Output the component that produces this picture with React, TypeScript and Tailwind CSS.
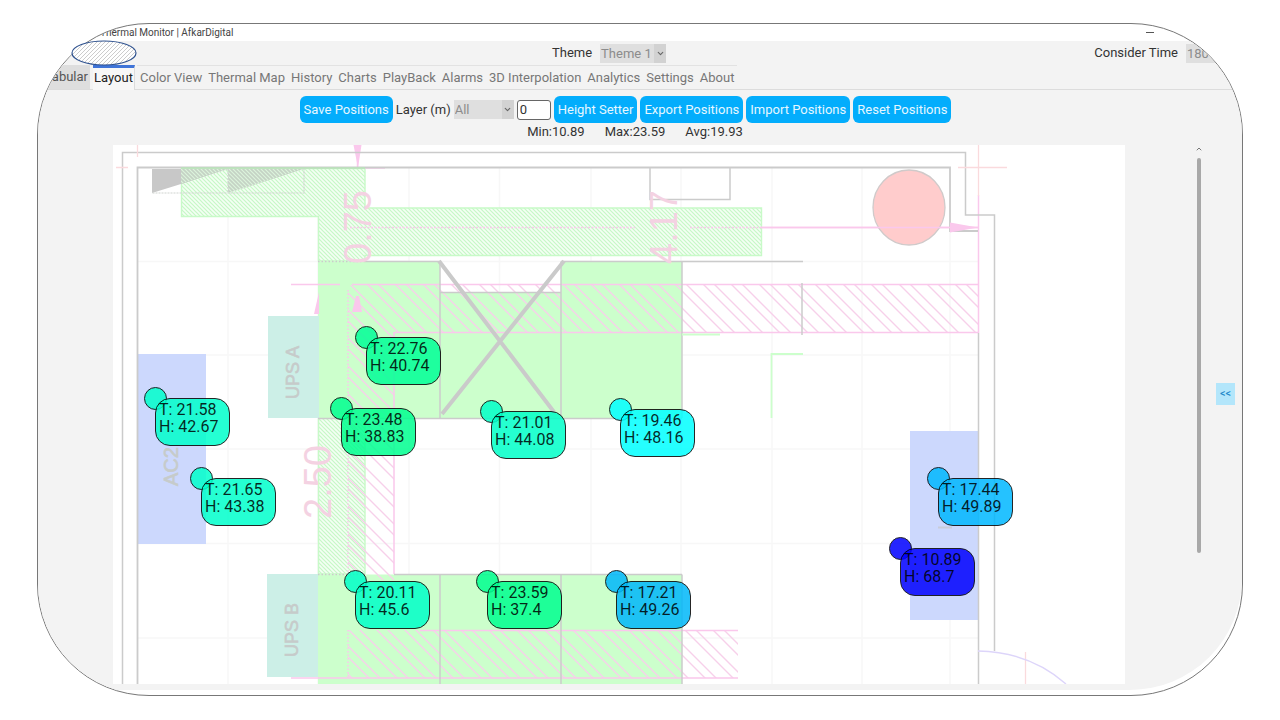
import { ChevronDown, ChevronUp } from "lucide-react";

const TABS = [
  "Tabular",
  "Layout",
  "Color View",
  "Thermal Map",
  "History",
  "Charts",
  "PlayBack",
  "Alarms",
  "3D Interpolation",
  "Analytics",
  "Settings",
  "About",
];

const STATS = [
  { label: "Min:", value: "10.89" },
  { label: "Max:", value: "23.59" },
  { label: "Avg:", value: "19.93" },
];

const PLAN = { x: 113, y: 145, width: 1012, height: 539 };

type Sensor = { x: number; y: number; t: string; h: string; color: string };

const SENSORS: Sensor[] = [
  { x: 366, y: 337, t: "22.76", h: "40.74", color: "bg-[#00ff96]" },
  { x: 341, y: 408, t: "23.48", h: "38.83", color: "bg-[#00ff90]" },
  { x: 155, y: 398, t: "21.58", h: "42.67", color: "bg-[#00ffcc]" },
  { x: 201, y: 478, t: "21.65", h: "43.38", color: "bg-[#00ffcc]" },
  { x: 491, y: 411, t: "21.01", h: "44.08", color: "bg-[#00ffc8]" },
  { x: 620, y: 409, t: "19.46", h: "48.16", color: "bg-[#00ffff]" },
  { x: 355, y: 581, t: "20.11", h: "45.6", color: "bg-[#00ffc8]" },
  { x: 487, y: 581, t: "23.59", h: "37.4", color: "bg-[#00ff90]" },
  { x: 616, y: 581, t: "17.21", h: "49.26", color: "bg-[#00b8fa]" },
  { x: 938, y: 478, t: "17.44", h: "49.89", color: "bg-[#00b8ff]" },
  { x: 900, y: 548, t: "10.89", h: "68.7", color: "bg-[#0000ff]" },
];

function SensorTag({ sensor }: { sensor: Sensor }) {
  const left = `${((sensor.x - PLAN.x) / PLAN.width) * 100}%`;
  const top = `${((sensor.y - PLAN.y) / PLAN.height) * 100}%`;
  return (
    <div className="absolute" style={{ left, top }}>
      <span className={`absolute -top-[11px] -left-[11px] size-[23px] rounded-full border border-black opacity-85 ${sensor.color}`} />
      <div className="relative h-12 w-[75px] text-base leading-[17px] text-black/85">
        <span className={`absolute inset-0 rounded-[15px] border border-black opacity-85 ${sensor.color}`} />
        <div className="relative pt-[3px] pl-1 whitespace-nowrap">
          <p>T: {sensor.t}</p>
          <p>H: {sensor.h}</p>
        </div>
      </div>
    </div>
  );
}

function FloorPlan() {
  const offsets = Array.from({ length: 50 }, (_, i) => i * 28 - 505);
  return (
    <svg viewBox="113 145 1012 539" className="block h-auto w-full bg-white" fill="none" role="img" aria-label="Room layout">
      <defs>
        <pattern id="tray" width="4" height="4" patternUnits="userSpaceOnUse">
          <rect width="4" height="4" fill="#f4fff4" />
          <path d="M-1 -1L5 5M-1 3L1 5M3 -1L5 1" stroke="#c6f8c6" strokeWidth="1.2" />
        </pattern>
        <pattern id="shade" width="4" height="4" patternUnits="userSpaceOnUse">
          <path d="M-1 -1L5 5M-1 3L1 5M3 -1L5 1" stroke="#dcf4dc" strokeWidth="1.2" />
        </pattern>
        <clipPath id="duct">
          <path d="M348 285H978V332H394V580H348ZM348 630H738V678H348Z" />
        </clipPath>
      </defs>

      <g stroke="#f7f7f7" strokeWidth="1.5">
        <path d="M137 261.500H978M137 355H978M137 449H978M137 543.500H978M137 638H978" />
        <path d="M228 168V684M318 168V684M409 168V684M499.500 168V684M591 168V684M681 168V684M772 168V684M862 168V684M950 232V684" />
      </g>

      <path d="M181.500 168.500H365V208H761.500V255.500H365V261H318.500V216.500H181.500Z" fill="url(#tray)" stroke="#c8fac8" strokeWidth="1.400" />
      <path d="M318.500 418H365V574H318.500Z" fill="url(#tray)" stroke="#c8fac8" strokeWidth="1.400" />
      <path d="M152 169H228L181 184L152 193Z" fill="#c8c8c8" />
      <path d="M181 169H228L181 184ZM228 169H304L228 193Z" fill="#c4d2c4" />
      <path d="M181 169H228L181 184ZM228 169H304L228 193Z" fill="url(#shade)" />
      <path d="M152.500 193H304V168.500M228 169V193" stroke="#d0d4d0" strokeWidth="1.200" strokeDasharray="2 1" />

      <path d="M318 261.500H440V292.500H561V261.500H682V418H318Z" fill="#ccffcc" />
      <path d="M318 574.500H682V684H318Z" fill="#ccffcc" />
      <rect x="268" y="316" width="51" height="102" fill="#ccefe7" />
      <rect x="267" y="574" width="51" height="103" fill="#ccefe7" />
      <rect x="137.500" y="354" width="68.500" height="190" fill="#ccd8fd" />
      <rect x="910" y="431" width="68.500" height="189" fill="#ccd8fd" />

      <g clipPath="url(#duct)" stroke="#f7d0ea" strokeWidth="1.400">
        {offsets.map((c) => (
          <path key={c} d={`M${c + 140} 140L${c + 690} 690M${c + 151} 140L${c + 701} 690`} />
        ))}
      </g>
      <g stroke="#fac8ec" strokeWidth="1.500">
        <path d="M291 284.500H340M352 284.500H978M394 332.500H978M394 332V574" />
        <path d="M420 630.500H738M291 678H738" />
        <path d="M348 290V574M348 630V678" strokeDasharray="1.500 2" />
        <path d="M357.500 150V168M365 168H385" />
        <path d="M350 227.500H635M690 227.500H761" strokeDasharray="2 1.500" />
        <path d="M761 227.500H978M978.500 195V333" />
      </g>
      <path d="M353.500 145H361.500L358 168ZM319 292L314 314H319ZM356 296L352 312H362L359 296Z" fill="#fac8ec" />

      <g stroke="#cbcbcb" strokeWidth="1.500">
        <path d="M122.500 684V152.500H965.500V215H994.500V651" />
        <path d="M137.500 684V167.500H950V231H978" strokeWidth="1.800" />
        <path d="M978.500 333V684" />
        <path d="M365 261.500H440M561 261.500H803M440 292.500H561M440 261.500V418M561 261.500V418M682 261.500V418M318 418.500H682M802 283V335" />
        <path d="M394 574.500H682M440 574.500V684M561 574.500V684M682 574.500V684" />
        <path d="M318 261.500H365M318 574.500H365" strokeDasharray="1.500 2" />
        <path d="M650 168V199.500H730V168" />
      </g>
      <path d="M181 168H365" stroke="#b9e4b9" strokeWidth="1.500" />
      <path d="M439 261L554 412M564 261L442 414" stroke="#cacaca" strokeWidth="4" />
      <path d="M682 334.500H720M803 354H771.500V418" stroke="#ccffcc" strokeWidth="1.800" />

      <g stroke="#fadadd" strokeWidth="1.300">
        <path d="M137.500 145V157M116 167.500H128M958 167.500H1007M978.500 145V196M1025.500 652V684" />
      </g>
      <path d="M978 651Q1030 652 1066 684" stroke="#ddd5fa" strokeWidth="1.500" />
      <ellipse cx="909" cy="207.500" rx="36" ry="37.500" fill="#ffcccc" stroke="#d0caca" strokeWidth="1.300" />
      <path d="M761 227.500H978" stroke="#fac8ec" strokeWidth="1.500" />
      <path d="M950 222.500L978 227.500L950 232.500Z" fill="#fac8ec" />

      <g className="font-['Liberation_Sans',sans-serif]" fill="#f4d2e2" fontSize="38">
        <text transform="translate(371 264) rotate(-90)">0.75</text>
        <text transform="translate(677 264) rotate(-90)">4.17</text>
        <text transform="translate(331 519) rotate(-90)">2.50</text>
      </g>
      <g className="font-['Liberation_Sans',sans-serif]" fill="#c6cbca" stroke="#c6cbca" strokeWidth="0.6" fontSize="18">
        <text transform="translate(299 399) rotate(-90)">UPS A</text>
        <text transform="translate(298 657) rotate(-90)">UPS B</text>
        <text transform="translate(178 486) rotate(-90)" fontSize="20">AC2</text>
      </g>
      <path d="M938 527.500H952" stroke="#c8ccd8" strokeWidth="2" />
    </svg>
  );
}

function ActionButton({ children }: { children: string }) {
  return (
    <button type="button" className="h-[27px] rounded-md bg-[#03adfc] px-1 text-[13px] whitespace-nowrap text-[#e6f7ff]">
      {children}
    </button>
  );
}

function Dropdown({ id, value, className }: { id: string; value: string; className: string }) {
  return (
    <span className={`relative flex h-[19px] bg-[#dfdfdf] ${className}`}>
      <select id={id} defaultValue={value} className="w-full appearance-none bg-transparent pl-px text-[13px] leading-[19px] text-[#8c8c8c] outline-none">
        <option>{value}</option>
      </select>
      <span className="pointer-events-none absolute inset-y-0 right-0 flex w-3 items-center justify-center bg-[#d2d2d2]">
        <ChevronDown className="size-[9px] text-[#666]" strokeWidth={3} />
      </span>
    </span>
  );
}

export default function App() {
  return (
    <div className="relative flex min-h-screen flex-col bg-white px-[37px] pt-[23px] pb-6 font-[Roboto,sans-serif] text-[13px] text-[#333]">
      <div className="flex flex-1 flex-col overflow-hidden rounded-[112px] border border-[#777] bg-white">
        <header className="flex h-[17px] items-center justify-between pr-[88px] pl-[62px] text-[10px] leading-none text-[#444]">
          <h1>Thermal Monitor | AfkarDigital</h1>
          <button type="button" aria-label="Minimize" className="flex h-4 w-2 items-center">
            <span className="h-px w-full bg-[#555]" />
          </button>
        </header>

        <div className="mb-[5px] flex flex-1 flex-col rounded-br-[112px] bg-[#f3f3f3]">
          <div className="flex h-6 items-center pl-[514px]">
            <label htmlFor="theme" className="mr-2">Theme</label>
            <Dropdown id="theme" value="Theme 1" className="w-[66px]" />
            <div className="ml-auto flex items-center gap-2">
              <label htmlFor="time" className="whitespace-nowrap">Consider Time</label>
              <Dropdown id="time" value="180" className="w-14" />
            </div>
          </div>

          <nav role="tablist" className="flex h-[25px] border-b border-[#dcdcdc] text-[#777]">
            {TABS.map((tab) => {
              if (tab === "Tabular") {
                return (
                  <button key={tab} type="button" role="tab" aria-selected={false} className="mr-[3px] w-[52px] bg-[#dedede] pr-[2px] text-right text-[#555]">
                    {tab}
                  </button>
                );
              }
              if (tab === "Layout") {
                return (
                  <button key={tab} type="button" role="tab" aria-selected className="mr-[2px] -mb-px w-[42px] border-t-3 border-r border-t-[#3f74d8] border-r-[#dcdcdc] bg-[#f7f7f7] pb-[2px] text-[#222]">
                    {tab}
                  </button>
                );
              }
              return (
                <button key={tab} type="button" role="tab" aria-selected={false} className="border-t border-[#e2e2e2] px-[3px] whitespace-nowrap">
                  {tab}
                </button>
              );
            })}
          </nav>

          <section className="flex items-center justify-center gap-[3px] pt-[6px] pr-[29px]" aria-label="Layout tools">
            <ActionButton>Save Positions</ActionButton>
            <label htmlFor="layer" className="whitespace-nowrap">Layer (m)</label>
            <Dropdown id="layer" value="All" className="w-[60px]" />
            <input aria-label="Height" defaultValue="0" className="h-5 w-[34px] rounded-[3px] border border-[#666] bg-white px-[2px] text-[13px] outline-none" />
            <ActionButton>Height Setter</ActionButton>
            <ActionButton>Export Positions</ActionButton>
            <ActionButton>Import Positions</ActionButton>
            <ActionButton>Reset Positions</ActionButton>
          </section>

          <dl className="flex h-[22px] justify-center gap-5 pr-[10px] pt-px leading-4">
            {STATS.map((stat) => (
              <div key={stat.label} className="flex">
                <dt>{stat.label}</dt>
                <dd>{stat.value}</dd>
              </div>
            ))}
          </dl>

          <main className="flex pl-[75px]">
            <div className="relative flex-1">
              <FloorPlan />
              {SENSORS.map((sensor) => (
                <SensorTag key={`${sensor.x}-${sensor.y}`} sensor={sensor} />
              ))}
            </div>
            <aside className="flex w-[117px] justify-end gap-[13px] pr-[7px]">
              <div className="flex w-2 flex-col items-center">
                <ChevronUp className="size-2 text-[#777]" strokeWidth={3} />
                <span className="mt-[5px] h-[395px] w-1 rounded-full bg-[#a8a8a8]" />
              </div>
              <button type="button" aria-label="Expand panel" className="mt-[238px] h-[22px] w-[19px] bg-[#b3e6fb] text-[11px] text-[#1d86c8]">
                {"<<"}
              </button>
            </aside>
          </main>
        </div>
      </div>

      <svg viewBox="0 0 66 26" className="absolute top-10 left-[71px] h-[26px] w-[66px]" aria-hidden="true">
        <defs>
          <pattern id="badge" width="4" height="4" patternUnits="userSpaceOnUse">
            <rect width="4" height="4" fill="#fff" />
            <path d="M-1 5L5 -1M-1 1L1 -1M3 5L5 3" stroke="#999" strokeWidth="0.500" />
          </pattern>
        </defs>
        <ellipse cx="33" cy="13" rx="32" ry="12" fill="url(#badge)" stroke="#2f528f" strokeWidth="1.200" />
      </svg>
    </div>
  );
}
